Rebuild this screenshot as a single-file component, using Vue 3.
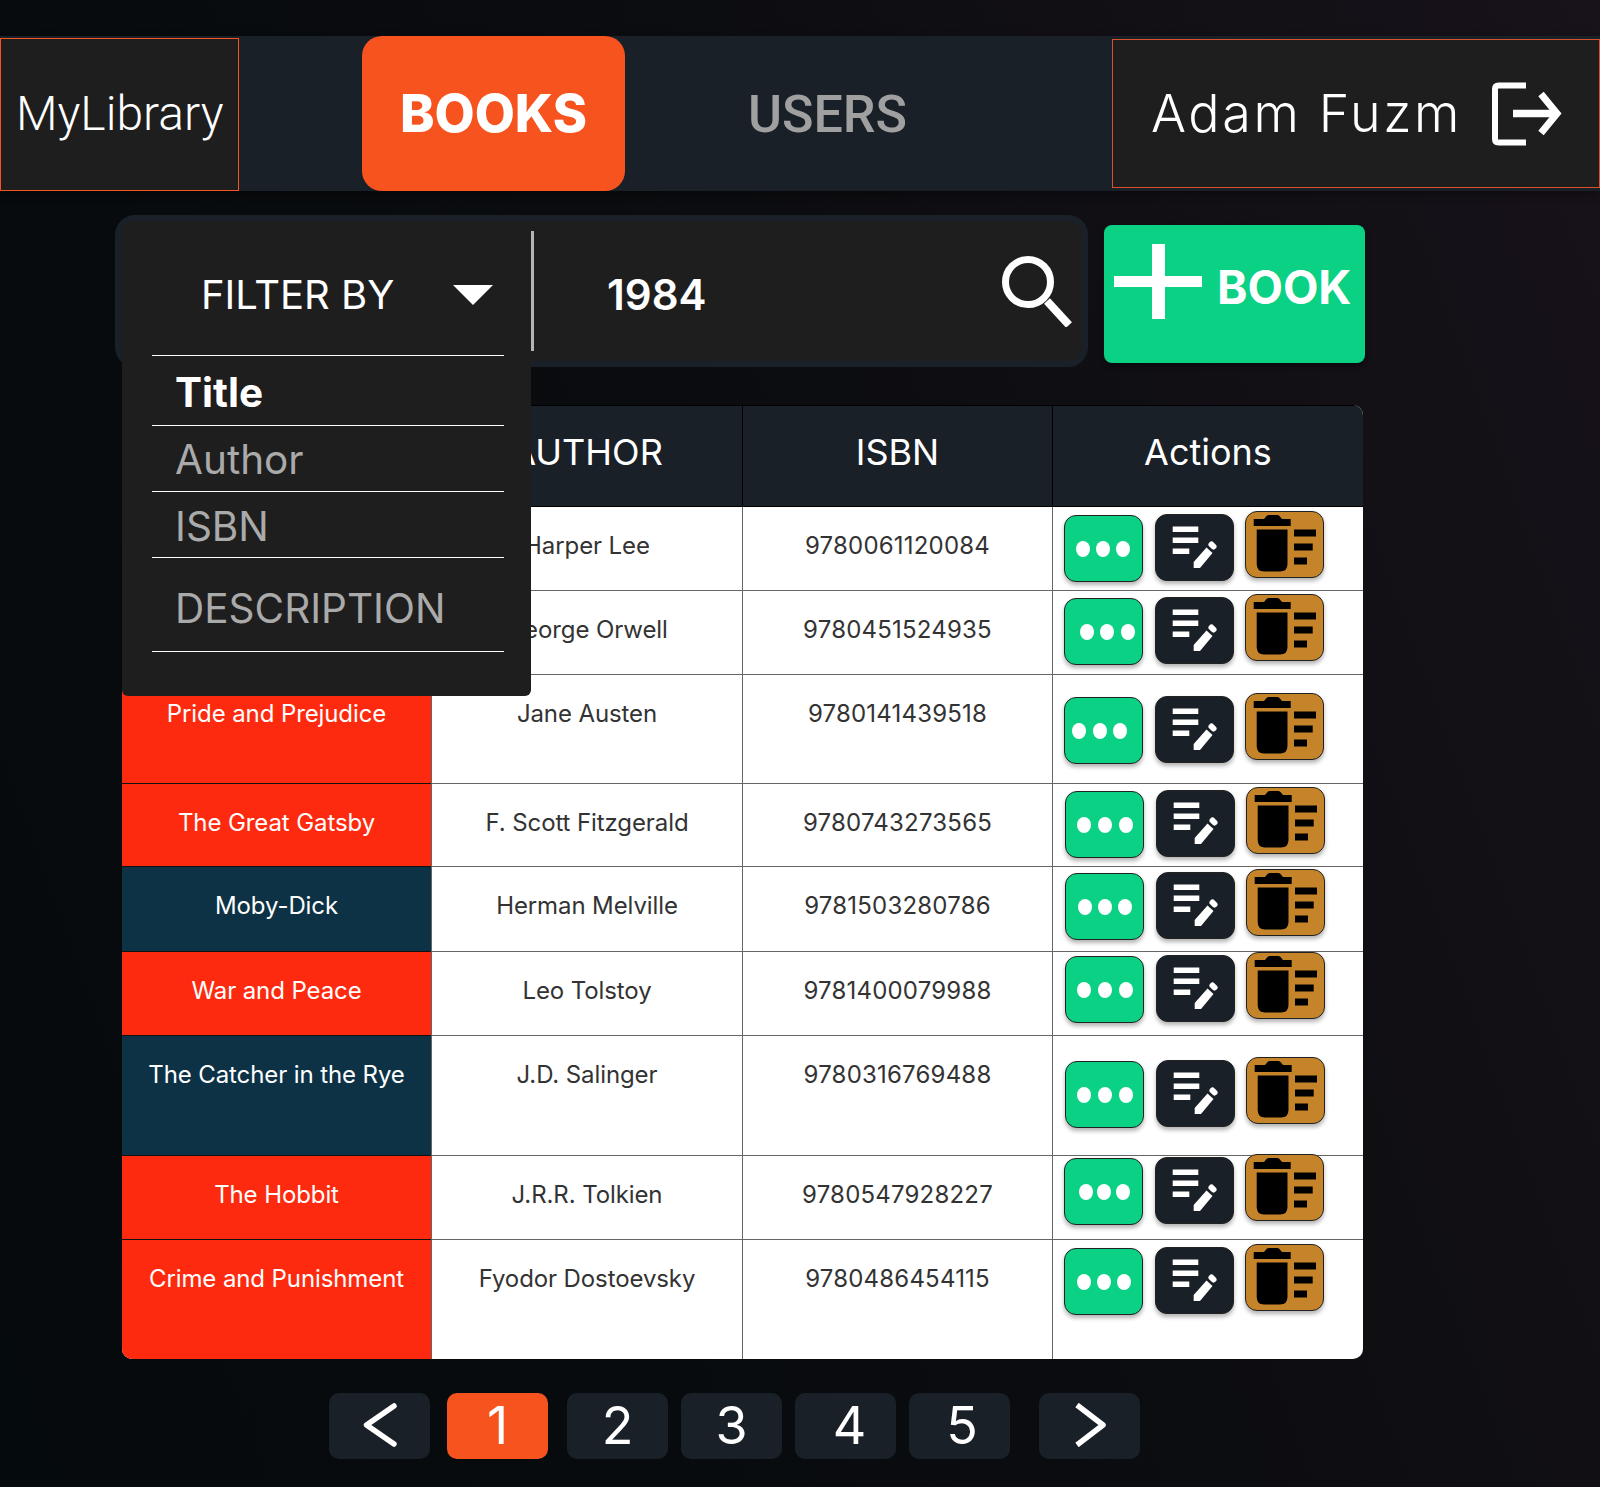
<template>
  <div class="page">
    <header class="topbar">
      <div class="logo">MyLibrary</div>
      <a class="tab active">BOOKS</a>
      <a class="tab">USERS</a>
      <div class="user">
        <span class="user-name">Adam Fuzm</span>
        <svg class="logout" viewBox="0 0 70 64" fill="none" stroke="#fff">
          <path d="M34 3.500H6.500Q3 3.500 3 7V57Q3 60.500 6.500 60.500H34" stroke-width="6" />
          <path d="M21 31.500H63" stroke-width="7.500" />
          <path d="M49 12L65 31.500L49 51" stroke-width="7" />
        </svg>
      </div>
    </header>

    <section class="toolbar">
      <div class="search-bar">
        <div class="filter">
          <span>FILTER BY</span>
          <i class="caret"></i>
        </div>
        <div class="search-value">1984</div>
        <svg class="search-icon" viewBox="0 0 70 71" fill="none" stroke="#fff">
          <circle cx="26" cy="26" r="22.500" stroke-width="7" />
          <path d="M45 45L67 69" stroke-width="8" />
        </svg>

        <ul class="filter-menu">
          <li v-for="opt in filterOptions" :key="opt.label" :class="{ selected: opt.selected }" :style="{ height: opt.h + 'px' }">
            <span :style="{ marginTop: opt.shift + 'px' }">{{ opt.label }}</span>
          </li>
        </ul>
      </div>

      <button class="add-book">
        <span class="plus"></span>
        <span>BOOK</span>
      </button>
    </section>

    <section class="book-table">
      <div class="table-head">
        <div>TITLE</div>
        <div>AUTHOR</div>
        <div>ISBN</div>
        <div>Actions</div>
      </div>
      <div v-for="book in books" :key="book.isbn" class="table-row" :style="{ height: book.h + 'px' }">
        <div class="cell title-cell" :class="book.tone">{{ book.title }}</div>
        <div class="cell">{{ book.author }}</div>
        <div class="cell isbn-cell">{{ book.isbn }}</div>
        <div class="cell actions-cell">
          <div class="actions" :style="{ marginTop: book.top + 'px', marginLeft: book.left + 'px' }">
            <button class="act view">
              <span class="dots" :style="{ paddingLeft: book.dots[0] - 7 + 'px', gap: book.dots[1] - 14 + 'px' }">
                <i></i><i></i><i></i>
              </span>
            </button>
            <button class="act edit">
              <svg viewBox="0 0 79 67" width="79" height="67">
                <path fill="#fff" d="M17.700 12.500H43.300V18H17.700ZM17.700 23.500H43.300V29H17.700ZM17.700 34.500H34.300V40H17.700Z" />
                <path fill="#fff" d="M38.700 54V48L51.500 33.500L57.500 39L45 54Z" />
                <path stroke="#fff" stroke-width="6" stroke-linecap="round" d="M56.500 30.500L58.500 32.500" />
              </svg>
            </button>
            <button class="act trash">
              <svg viewBox="0 0 79 67" width="79" height="67">
                <path d="M8.700 8H19L21.500 5Q22.500 4 24 4H32Q33.500 4 34.500 5L37 8H45.700V15H8.700Z" />
                <path d="M11.700 18.500H42.500V53Q42.500 60.500 35 60.500H19Q11.700 60.500 11.700 53Z" />
                <path d="M49 18.500H71V25.500H49ZM49 32.500H67.700V39.500H49ZM49 46.500H62V53.500H49Z" />
              </svg>
            </button>
          </div>
        </div>
      </div>
    </section>

    <nav class="pager">
      <button class="page-btn arrow">
        <svg viewBox="0 0 34 44" width="34" height="44" fill="none" stroke="#fff" stroke-width="5.500" stroke-linecap="round" stroke-linejoin="round">
          <path d="M31 3L3.500 22L31 41" />
        </svg>
      </button>
      <button v-for="n in pages" :key="n.label" class="page-btn" :class="{ current: n.label === 1 }" :style="{ marginLeft: n.gap + 'px', paddingLeft: n.nudge + 'px' }">{{ n.label }}</button>
      <button class="page-btn arrow next">
        <svg viewBox="0 0 34 44" width="34" height="44" fill="none" stroke="#fff" stroke-width="5.500" stroke-linejoin="round">
          <path d="M4 2L30 22L4 42" />
        </svg>
      </button>
    </nav>
  </div>
</template>

<script setup>
const filterOptions = [
  { label: 'Title', h: 70, shift: 4, selected: true },
  { label: 'Author', h: 66, shift: 2 },
  { label: 'ISBN', h: 66, shift: 4 },
  { label: 'DESCRIPTION', h: 95, shift: 8 },
];

const books = [
  { title: 'To Kill a Mockingbird', author: 'Harper Lee', isbn: '9780061120084', tone: 'red', h: 84, top: 4, left: 0, dots: [17.7, 20] },
  { title: '1984', author: 'George Orwell', isbn: '9780451524935', tone: 'navy', h: 84, top: 3, left: 0, dots: [22.3, 20.2] },
  { title: 'Pride and Prejudice', author: 'Jane Austen', isbn: '9780141439518', tone: 'red', h: 109, top: 18, left: 0, dots: [14.3, 20.4] },
  { title: 'The Great Gatsby', author: 'F. Scott Fitzgerald', isbn: '9780743273565', tone: 'red', h: 83, top: 3, left: 1, dots: [18, 20.8] },
  { title: 'Moby-Dick', author: 'Herman Melville', isbn: '9781503280786', tone: 'navy', h: 85, top: 2, left: 1, dots: [19.3, 20] },
  { title: 'War and Peace', author: 'Leo Tolstoy', isbn: '9781400079988', tone: 'red', h: 84, top: 0, left: 1, dots: [18, 20.8] },
  { title: 'The Catcher in the Rye', author: 'J.D. Salinger', isbn: '9780316769488', tone: 'navy', h: 120, top: 21, left: 1, dots: [18, 20.8] },
  { title: 'The Hobbit', author: 'J.R.R. Tolkien', isbn: '9780547928227', tone: 'red', h: 84, top: -2, left: 0, dots: [20.7, 18.7] },
  { title: 'Crime and Punishment', author: 'Fyodor Dostoevsky', isbn: '9780486454115', tone: 'red', h: 119, top: 4, left: 0, dots: [19, 19.8] },
];

const pages = [
  { label: 1, gap: 17, nudge: 0 },
  { label: 2, gap: 19, nudge: 0 },
  { label: 3, gap: 13, nudge: 0 },
  { label: 4, gap: 13, nudge: 8 },
  { label: 5, gap: 13, nudge: 5 },
];
</script>

<style>
html, body {
  margin: 0;
  background: #0a0c0f;
}
</style>

<style scoped>
* {
  box-sizing: border-box;
}

.page {
  width: 1600px;
  height: 1487px;
  padding-top: 36px;
  overflow: hidden;
  background: linear-gradient(70deg, #050a0c 0%, #0a0c0f 50%, #18121a 100%);
  font-family: Inter, "Liberation Sans", sans-serif;
}

/* top bar */
.topbar {
  display: flex;
  height: 155px;
  background: #1a2027;
  box-shadow: 0 4px 8px rgba(0, 0, 0, 0.35);
}

.logo {
  width: 239px;
  height: 153px;
  margin-top: 2px;
  padding: 0 0 3px 15px;
  display: flex;
  align-items: center;
  background: #1e1e1e;
  border: 1px solid #f7541f;
  color: #fff;
  font-family: Roboto, sans-serif;
  font-weight: 300;
  font-size: 48px;
}

.tab {
  width: 263px;
  padding-top: 2px;
  display: flex;
  align-items: center;
  justify-content: center;
  color: #a0a0a0;
  font-family: Roboto, sans-serif;
  font-weight: 500;
  font-size: 52px;
}

.tab.active {
  margin-left: 123px;
  margin-right: 71px;
  padding-top: 0;
  background: #f6531f;
  border-radius: 20px;
  color: #fff;
  font-family: Inter, sans-serif;
  font-weight: 800;
  font-size: 52px;
}

.user {
  width: 488px;
  height: 149px;
  margin-top: 3px;
  margin-left: auto;
  padding-left: 38px;
  display: flex;
  align-items: center;
  background: #1e1e1e;
  border: 1px solid #d9512a;
}

.user-name {
  width: 341px;
  color: #fff;
  font-family: Inter, sans-serif;
  font-weight: 300;
  font-size: 52px;
  letter-spacing: 2.600px;
}

.logout {
  width: 70px;
  height: 64px;
}

/* search row */
.toolbar {
  display: flex;
  align-items: flex-start;
  margin: 24px 0 0 115px;
}

.search-bar {
  position: relative;
  width: 973px;
  height: 152px;
  display: flex;
  align-items: center;
  background: #1e1e1e;
  border: 6px solid #1a2027;
  border-radius: 20px;
}

.filter {
  position: relative;
  width: 412px;
  height: 120px;
  padding: 7px 0 0 80px;
  display: flex;
  align-items: center;
  color: #fff;
  font-size: 40px;
}

.filter::after {
  content: "";
  position: absolute;
  right: -1px;
  top: 0;
  bottom: 0;
  width: 3px;
  background: #b4b4b4;
}

.caret {
  margin-left: 59px;
  border-left: 20px solid transparent;
  border-right: 20px solid transparent;
  border-top: 20px solid #fff;
}

.search-value {
  margin: 7px 0 0 74px;
  color: #fff;
  font-size: 42px;
  font-weight: 600;
}

.search-icon {
  position: absolute;
  right: 10px;
  top: 35px;
  width: 70px;
  height: 71px;
}

.filter-menu {
  position: absolute;
  z-index: 2;
  left: 1px;
  top: 134px;
  width: 409px;
  height: 341px;
  margin: 0;
  padding: 0 27px 0 30px;
  list-style: none;
  background: #1e1e1e;
  border-radius: 0 0 6px 6px;
}

.filter-menu li {
  display: flex;
  align-items: center;
  padding-left: 23px;
  border-top: 1px solid #fff;
  color: #aaa;
  font-size: 40.500px;
}

.filter-menu li:last-child {
  border-bottom: 1px solid #fff;
}

.filter-menu li.selected {
  color: #fff;
  font-weight: 700;
}

.add-book {
  position: relative;
  width: 261px;
  height: 138px;
  margin: 10px 0 0 16px;
  padding: 0 0 14px 113px;
  display: flex;
  align-items: center;
  border: none;
  border-radius: 8px;
  background: #0bd185;
  box-shadow: 0 3px 5px rgba(0, 0, 0, 0.4);
  color: #fff;
  font-family: Inter, sans-serif;
  font-weight: 700;
  font-size: 46px;
}

.plus {
  position: absolute;
  left: 10px;
  top: 19px;
  width: 88px;
  height: 75px;
  background:
    linear-gradient(#fff, #fff) center / 13px 100% no-repeat,
    linear-gradient(#fff, #fff) center / 100% 11px no-repeat;
}

/* table */
.book-table {
  width: 1241px;
  margin: 38px 0 0 122px;
  border-radius: 10px;
  overflow: hidden;
  background: #fff;
}

.table-head,
.table-row {
  display: grid;
  grid-template-columns: 309px 311px 310px 1fr;
}

.table-head {
  height: 102px;
  background: #1a2027;
  border-top: 1px solid #000;
  color: #fff;
  font-size: 36px;
}

.table-head div {
  display: flex;
  align-items: center;
  justify-content: center;
  padding-bottom: 8px;
  border-left: 1px solid #000;
  border-bottom: 1px solid #000;
}

.cell {
  padding-top: 24px;
  text-align: center;
  font-size: 24px;
  line-height: 29px;
  letter-spacing: -0.100px;
  color: #333;
  border-left: 1px solid #666;
  border-bottom: 1px solid #666;
}

.isbn-cell {
  letter-spacing: 0.200px;
}

.title-cell {
  color: #fff;
  border-left: none;
  border-bottom-color: #111;
}

.title-cell.red {
  background: #fe2a0f;
}

.title-cell.navy {
  background: #0d3246;
}

.table-row:last-child .cell {
  border-bottom: none;
}

.actions-cell {
  padding: 0 0 0 11px;
}

.actions {
  display: flex;
  align-items: flex-start;
  gap: 12px;
}

.act {
  display: block;
  width: 79px;
  height: 67px;
  padding: 0;
  border: 1px solid #222;
  border-radius: 12px;
  box-shadow: 0 3px 4px rgba(0, 0, 0, 0.3);
}

.act svg {
  display: block;
  margin: -1px;
}

.view {
  margin-top: 4px;
  background: #0bd185;
}

.edit {
  margin-top: 3px;
  background: #1a2027;
}

.trash {
  margin-left: -1px;
  background: #c6842a;
}

.dots {
  display: flex;
  align-items: center;
  height: 100%;
}

.dots i {
  width: 14px;
  height: 16px;
  border-radius: 50%;
  background: #fff;
}

/* pagination */
.pager {
  display: flex;
  margin: 34px 0 0 329px;
}

.page-btn {
  width: 101px;
  height: 66px;
  padding: 0 0 2px;
  display: flex;
  align-items: center;
  justify-content: center;
  border: none;
  border-radius: 10px;
  background: #1a2027;
  color: #fff;
  font-family: Inter, sans-serif;
  font-size: 52px;
}

.page-btn.current {
  background: #f6531f;
}

.page-btn.next {
  margin-left: 29px;
}
</style>
